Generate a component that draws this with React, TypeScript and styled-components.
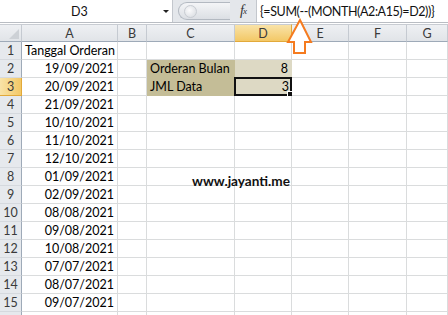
import React from "react";
import styled, { createGlobalStyle } from "styled-components";

const Global = createGlobalStyle`
  html, body { margin: 0; padding: 0; background: #fff; }
  body { font-family: Lato, "Open Sans", sans-serif; overflow: hidden; }
`;

const Page = styled.div`
  position: relative;
  width: 448px;
  height: 315px;
  overflow: hidden;
  background: #fff;
`;

const FormulaBar = styled.div`
  display: flex;
  align-items: stretch;
  height: 22px;
  background: #e4e7eb;
  border-bottom: 1px solid #b9bdc3;
`;

const NameBox = styled.div`
  width: 172px;
  display: flex;
  align-items: center;
  background: #fff;
  border-right: 1px solid #c3c7cd;
  font-size: 12.5px;
  color: #111;
`;

const NameText = styled.span`
  flex: 1;
  text-align: center;
  padding-right: 4px;
`;

const Drop = styled.span`
  width: 0;
  height: 0;
  margin-right: 3px;
  border-left: 3px solid transparent;
  border-right: 3px solid transparent;
  border-top: 3px solid #222;
`;

const Pill = styled.div`
  margin: 2px 0 2px 5px;
  width: 46px;
  border: 1px solid #b3b9c1;
  border-right: none;
  border-radius: 10px 0 0 10px;
  background: linear-gradient(#f4f5f7, #dcdfe4);
  display: flex;
  align-items: center;
  padding-left: 5px;
`;

const Knob = styled.span`
  width: 11px;
  height: 11px;
  border-radius: 50%;
  background: radial-gradient(circle at 40% 40%, #fbfbfc, #d5d9de);
  border: 1px solid #c8ccd2;
`;

const Fx = styled.div`
  width: 26px;
  display: flex;
  align-items: center;
  justify-content: center;
  font-family: "Liberation Serif", serif;
  font-style: italic;
  font-size: 14px;
  color: #333;
  letter-spacing: -1px;
  & sub { font-size: 9px; vertical-align: -1px; }
`;

const FormulaInput = styled.div`
  flex: 1;
  display: flex;
  align-items: center;
  background: #fff;
  border-left: 1px solid #c3c7cd;
  padding-left: 3px;
  font-size: 12.5px;
  letter-spacing: -0.4px;
  color: #111;
  white-space: nowrap;
`;

const Gap = styled.div`
  height: 1px;
  background: #fff;
`;

const Sheet = styled.div`
  display: grid;
  grid-template-columns: 22px 96px 29px 88px 57px 57px 58px 41px;
  grid-auto-rows: 18px;
`;

const ColHead = styled.div<{ $sel?: boolean }>`
  box-sizing: border-box;
  display: flex;
  align-items: center;
  justify-content: center;
  font-size: 12.5px;
  color: #3a3a3a;
  background: ${(p) =>
    p.$sel ? "linear-gradient(#f9e3a8, #f3c866)" : "linear-gradient(#eef0f3, #e1e4e8)"};
  border-right: 1px solid ${(p) => (p.$sel ? "#e2a93a" : "#c5cad1")};
  border-bottom: 1px solid ${(p) => (p.$sel ? "#e2a93a" : "#9eaab8")};
  border-top: 1px solid #c8ccd2;
`;

const Corner = styled(ColHead)`
  position: relative;
  &::after {
    content: "";
    position: absolute;
    right: 2px;
    bottom: 2px;
    width: 0;
    height: 0;
    border-left: 10px solid transparent;
    border-bottom: 10px solid #cdd1d6;
  }
`;

const RowHead = styled.div<{ $sel?: boolean }>`
  box-sizing: border-box;
  display: flex;
  align-items: center;
  justify-content: center;
  font-size: 12.5px;
  color: #3a3a3a;
  background: ${(p) => (p.$sel ? "linear-gradient(90deg,#f9e3a8,#f3c866)" : "#e6e9ed")};
  border-right: 1px solid ${(p) => (p.$sel ? "#e2a93a" : "#9eaab8")};
  border-bottom: 1px solid ${(p) => (p.$sel ? "#e2a93a" : "#d5d9de")};
`;

const Cell = styled.div<{ $align?: "left" | "right"; $fill?: string; $active?: boolean }>`
  position: relative;
  box-sizing: border-box;
  display: flex;
  align-items: center;
  justify-content: ${(p) => (p.$align === "right" ? "flex-end" : "flex-start")};
  padding: 0 3px;
  font-size: 12.5px;
  color: #000;
  white-space: nowrap;
  background: ${(p) => p.$fill || "#fff"};
  border-right: 1px solid ${(p) => (p.$fill ? p.$fill : "#dadcdd")};
  border-bottom: 1px solid ${(p) => (p.$fill ? p.$fill : "#dadcdd")};
  ${(p) =>
    p.$active &&
    `
    border: 2px solid #111;
    margin: -1px 0 0 -1px;
    padding-right: 1px;
    &::after {
      content: "";
      position: absolute;
      right: -4px;
      bottom: -4px;
      width: 5px;
      height: 5px;
      background: #111;
      border: 1px solid #fff;
    }
  `}
`;

const Watermark = styled.div`
  position: absolute;
  left: 192px;
  top: 173px;
  font-size: 13.6px;
  font-weight: 700;
  color: #111;
  font-family: Lato, sans-serif;
`;

const ArrowSvg = styled.svg`
  position: absolute;
  left: 284px;
  top: 18px;
`;

const dates = [
  "19/09/2021",
  "20/09/2021",
  "21/09/2021",
  "10/10/2021",
  "11/10/2021",
  "12/10/2021",
  "01/09/2021",
  "02/09/2021",
  "08/08/2021",
  "09/08/2021",
  "10/08/2021",
  "07/07/2021",
  "08/07/2021",
  "09/07/2021",
];

const cols = ["A", "B", "C", "D", "E", "F", "G"];

export default function App() {
  const rows: React.ReactNode[] = [];
  for (let r = 1; r <= 16; r++) {
    rows.push(
      <RowHead key={`h${r}`} $sel={r === 3}>
        {r <= 15 ? r : ""}
      </RowHead>
    );
    const a = r === 1 ? "Tanggal Orderan" : r <= 15 ? dates[r - 2] : "";
    rows.push(
      <Cell key={`a${r}`} $align={r === 1 ? "left" : "right"}>
        {a}
      </Cell>
    );
    rows.push(<Cell key={`b${r}`} />);
    if (r === 2) {
      rows.push(<Cell key="c2" $fill="#c4bd97">Orderan Bulan</Cell>);
      rows.push(<Cell key="d2" $fill="#ddd9c4" $align="right">8</Cell>);
    } else if (r === 3) {
      rows.push(<Cell key="c3" $fill="#c4bd97">JML Data</Cell>);
      rows.push(<Cell key="d3" $fill="#ddd9c4" $align="right" $active>3</Cell>);
    } else {
      rows.push(<Cell key={`c${r}`} />);
      rows.push(<Cell key={`d${r}`} />);
    }
    rows.push(<Cell key={`e${r}`} />);
    rows.push(<Cell key={`f${r}`} />);
    rows.push(<Cell key={`g${r}`} />);
  }

  return (
    <Page>
      <Global />
      <FormulaBar>
        <NameBox>
          <NameText>D3</NameText>
          <Drop />
        </NameBox>
        <Pill>
          <Knob />
        </Pill>
        <Fx>
          f<sub>x</sub>
        </Fx>
        <FormulaInput>{"{=SUM(--(MONTH(A2:A15)=D2))}"}</FormulaInput>
      </FormulaBar>
      <Gap />
      <Sheet>
        <Corner />
        {cols.map((c) => (
          <ColHead key={c} $sel={c === "D"}>
            {c}
          </ColHead>
        ))}
        {rows}
      </Sheet>
      <Watermark>www.jayanti.me</Watermark>
      <ArrowSvg width="30" height="40" viewBox="0 0 30 40">
        <path
          d="M16 2 L27 24 L21 24 L21 35 L10 35 L10 24 L4 24 Z"
          fill="#fff"
          stroke="#f57b1f"
          strokeWidth="2"
          strokeLinejoin="miter"
        />
      </ArrowSvg>
    </Page>
  );
}
